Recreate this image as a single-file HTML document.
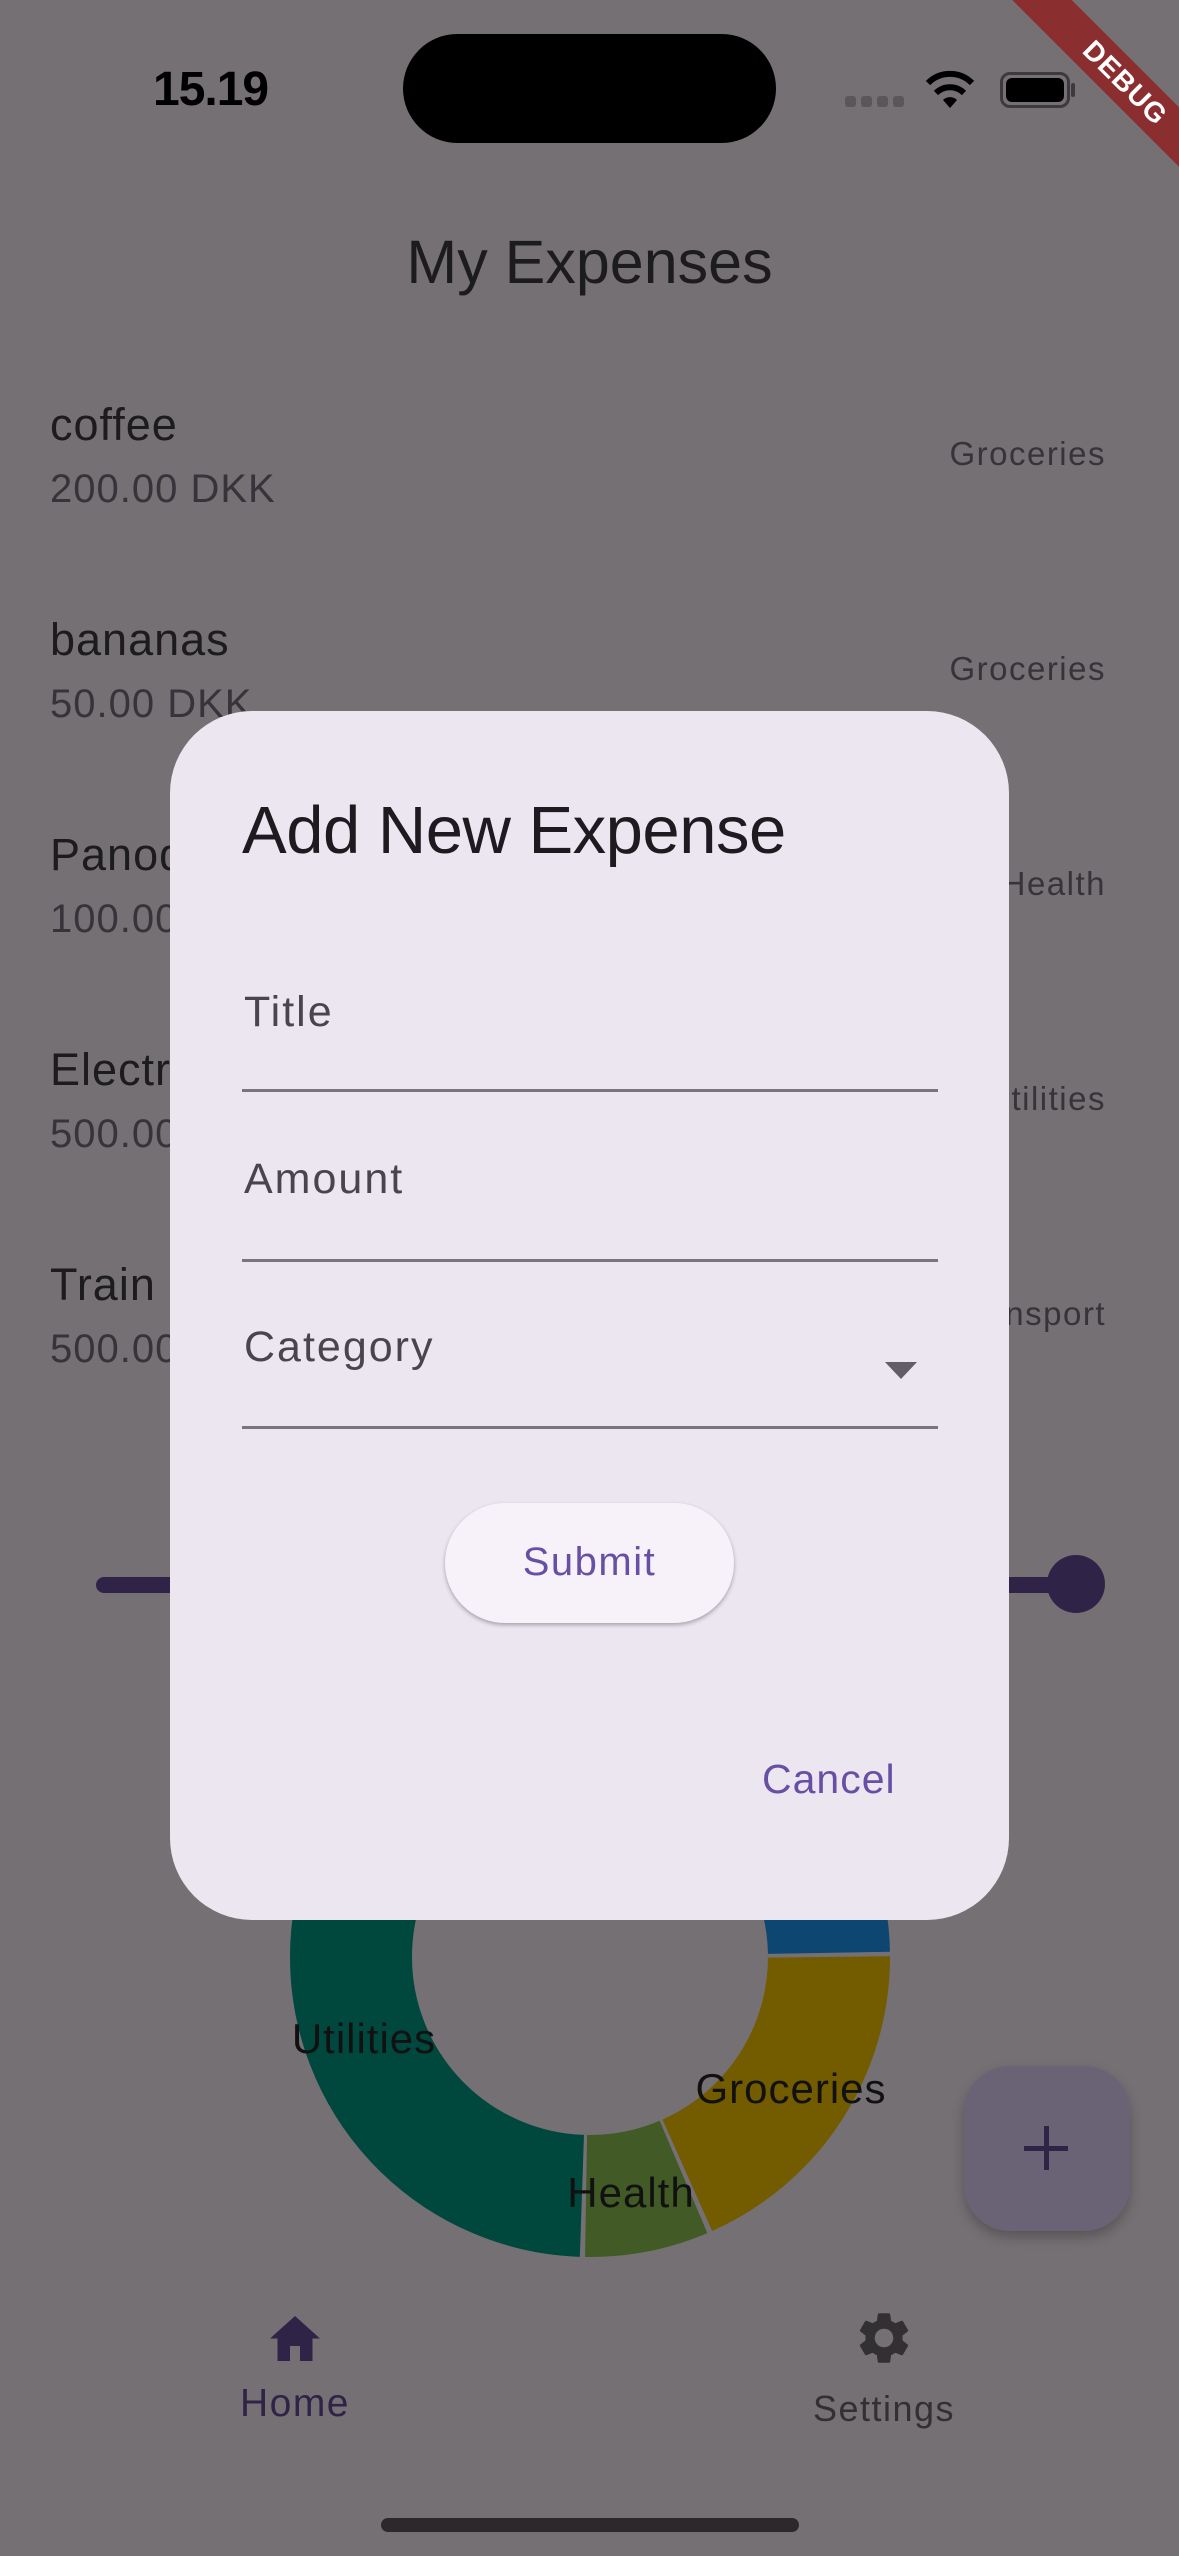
<!DOCTYPE html>
<html><head><meta charset="utf-8"><style>
*{margin:0;padding:0;box-sizing:border-box}
body{width:1179px;height:2556px;background:#757074;position:relative;overflow:hidden;font-family:"Liberation Sans",sans-serif;color:#1c1b1e}
.a{position:absolute;white-space:nowrap;line-height:1}
.t{font-size:45px;color:#1c1b1e;letter-spacing:1px}
.s{font-size:40px;color:#36333a;letter-spacing:1px}
.c{font-size:33px;color:#36333a;letter-spacing:1.5px}
</style></head><body>
<!-- status bar -->
<div class="a" style="left:153px;top:66px;font-size:48px;font-weight:bold;color:#000;letter-spacing:-1px">15.19</div>
<div class="a" style="left:403px;top:34px;width:373px;height:109px;border-radius:55px;background:#000"></div>
<div class="a" style="left:845px;top:96px;width:60px;height:11px">
<span style="position:absolute;left:0;width:11px;height:11px;border-radius:3px;background:#5a565a"></span>
<span style="position:absolute;left:16px;width:11px;height:11px;border-radius:3px;background:#5a565a"></span>
<span style="position:absolute;left:32px;width:11px;height:11px;border-radius:3px;background:#5a565a"></span>
<span style="position:absolute;left:48px;width:11px;height:11px;border-radius:3px;background:#5a565a"></span></div>
<svg class="a" style="left:925px;top:68px" width="50" height="42" viewBox="0 0 50 42"><path d="M25 40 L18 32 A10 10 0 0 1 32 32 Z" fill="#000"/><path d="M11 25 A20 20 0 0 1 39 25" stroke="#000" stroke-width="6" fill="none"/><path d="M3 15 A31 31 0 0 1 47 15" stroke="#000" stroke-width="6" fill="none"/></svg>
<div class="a" style="left:1000px;top:72px;width:70px;height:36px;border:3px solid #3d3a3e;border-radius:10px;padding:3px"><div style="width:100%;height:100%;background:#000;border-radius:6px"></div></div>
<div class="a" style="left:1071px;top:83px;width:4px;height:14px;background:#3d3a3e;border-radius:2px"></div>
<!-- debug banner -->
<div class="a" style="left:985px;top:62px;width:280px;height:42px;background:#8a2e30;transform:rotate(45deg);color:#fff;font-weight:bold;font-size:28px;text-align:center;line-height:42px;letter-spacing:1px">DEBUG</div>
<!-- title -->
<div class="a" style="left:0;width:1179px;text-align:center;top:232px;font-size:61px;color:#1c1b1e">My Expenses</div>
<!-- list -->
<div class="a t" style="left:50px;top:402px">coffee</div>
<div class="a s" style="left:50px;top:469px">200.00 DKK</div>
<div class="a c" style="right:73px;top:437px">Groceries</div>
<div class="a t" style="left:50px;top:617px">bananas</div>
<div class="a s" style="left:50px;top:684px">50.00 DKK</div>
<div class="a c" style="right:73px;top:652px">Groceries</div>
<div class="a t" style="left:50px;top:832px">Panodil</div>
<div class="a s" style="left:50px;top:899px">100.00 DKK</div>
<div class="a c" style="right:73px;top:867px">Health</div>
<div class="a t" style="left:50px;top:1047px">Electricity</div>
<div class="a s" style="left:50px;top:1114px">500.00 DKK</div>
<div class="a c" style="right:73px;top:1082px">Utilities</div>
<div class="a t" style="left:50px;top:1262px">Train</div>
<div class="a s" style="left:50px;top:1329px">500.00 DKK</div>
<div class="a c" style="right:73px;top:1297px">Transport</div>
<!-- slider -->
<div class="a" style="left:96px;top:1577px;width:980px;height:16px;border-radius:8px;background:#2f2447"></div>
<div class="a" style="left:1047px;top:1555px;width:58px;height:58px;border-radius:50%;background:#2f2447"></div>
<!-- donut -->
<svg class="a" style="left:0;top:0" width="1179" height="2556">
<g transform="rotate(-90 590 1957)" fill="none" stroke-width="122">
<circle cx="590" cy="1957" r="239" stroke="#0d4670" pathLength="360" stroke-dasharray="89 271" stroke-dashoffset="0"/>
<circle cx="590" cy="1957" r="239" stroke="#735b00" pathLength="360" stroke-dasharray="66 294" stroke-dashoffset="-90"/>
<circle cx="590" cy="1957" r="239" stroke="#425a25" pathLength="360" stroke-dasharray="24 336" stroke-dashoffset="-157"/>
<circle cx="590" cy="1957" r="239" stroke="#00483e" pathLength="360" stroke-dasharray="117 243" stroke-dashoffset="-182"/>
<circle cx="590" cy="1957" r="239" stroke="#5a3a5a" pathLength="360" stroke-dasharray="59 301" stroke-dashoffset="-300"/>
</g>
<text x="364" y="2053" font-size="42" text-anchor="middle" fill="#111" font-family="Liberation Sans" letter-spacing="1">Utilities</text>
<text x="791" y="2103" font-size="42" text-anchor="middle" fill="#111" font-family="Liberation Sans" letter-spacing="1">Groceries</text>
<text x="631" y="2207" font-size="42" text-anchor="middle" fill="#111" font-family="Liberation Sans" letter-spacing="1">Health</text>
</svg>
<!-- FAB -->
<div class="a" style="left:964px;top:2066px;width:166px;height:165px;border-radius:46px;background:#6a6375;box-shadow:0 6px 12px rgba(0,0,0,.25)"></div>
<div class="a" style="left:1024px;top:2146px;width:44px;height:5px;background:#2e2445"></div>
<div class="a" style="left:1044px;top:2126px;width:5px;height:44px;background:#2e2445"></div>
<!-- nav -->
<svg class="a" style="left:265px;top:2308px" width="60" height="56" viewBox="0 0 24 22"><path d="M10 21v-6h4v6h5v-9h3L12 3 2 12h3v9z" fill="#2f2447"/></svg>
<div class="a" style="left:195px;width:200px;text-align:center;top:2384px;font-size:39px;color:#2f2447;letter-spacing:1.5px">Home</div>
<svg class="a" style="left:853px;top:2307px" width="62" height="62" viewBox="0 0 24 24"><path fill="#333033" d="M19.14 12.94c.04-.3.06-.61.06-.94 0-.32-.02-.64-.07-.94l2.03-1.58a.49.49 0 0 0 .12-.61l-1.92-3.32a.49.49 0 0 0-.59-.22l-2.39.96c-.5-.38-1.03-.7-1.62-.94l-.36-2.54a.48.48 0 0 0-.48-.41h-3.840c-.24 0-.43.17-.47.41l-.36 2.54c-.59.24-1.130.57-1.62.94l-2.39-.96a.48.48 0 0 0-.59.22L2.74 8.87c-.12.21-.08.47.12.61l2.03 1.58c-.05.3-.09.63-.09.94s.02.64.07.94l-2.03 1.58a.49.49 0 0 0-.12.61l1.92 3.32c.12.22.37.29.59.22l2.39-.96c.5.38 1.03.7 1.62.94l.36 2.54c.05.24.24.41.48.41h3.84c.24 0 .44-.17.47-.41l.36-2.54c.59-.24 1.13-.56 1.62-.94l2.39.96c.22.08.47 0 .59-.22l1.92-3.32c.12-.22.07-.47-.12-.61l-2.01-1.58zM12 15.6A3.6 3.6 0 1 1 12 8.4a3.6 3.6 0 0 1 0 7.2z"/></svg>
<div class="a" style="left:784px;width:200px;text-align:center;top:2391px;font-size:36px;color:#333033;letter-spacing:1.5px">Settings</div>
<div class="a" style="left:381px;top:2518px;width:418px;height:14px;border-radius:7px;background:#2b292b"></div>
<!-- dialog -->
<div class="a" style="left:170px;top:711px;width:839px;height:1209px;border-radius:82px;background:#ece6f0"></div>
<div class="a" style="left:242px;top:797px;font-size:67px;color:#1d1b20;letter-spacing:-0.5px">Add New Expense</div>
<div class="a" style="left:244px;top:991px;font-size:43px;color:#49454f;letter-spacing:2px">Title</div>
<div class="a" style="left:242px;top:1089px;width:696px;height:3px;background:#79747e"></div>
<div class="a" style="left:244px;top:1158px;font-size:43px;color:#49454f;letter-spacing:2px">Amount</div>
<div class="a" style="left:242px;top:1259px;width:696px;height:3px;background:#79747e"></div>
<div class="a" style="left:244px;top:1326px;font-size:43px;color:#49454f;letter-spacing:2px">Category</div>
<div class="a" style="left:885px;top:1362px;width:0;height:0;border-left:16px solid transparent;border-right:16px solid transparent;border-top:17px solid #625d66"></div>
<div class="a" style="left:242px;top:1426px;width:696px;height:3px;background:#79747e"></div>
<div class="a" style="left:445px;top:1503px;width:289px;height:120px;border-radius:60px;background:#f7f2fa;box-shadow:0 2px 4px rgba(0,0,0,.3)"></div>
<div class="a" style="left:445px;width:289px;text-align:center;top:1542px;font-size:40px;color:#6750a4;letter-spacing:1.5px">Submit</div>
<div class="a" style="left:762px;top:1759px;font-size:41px;color:#6750a4;letter-spacing:1px">Cancel</div>
</body></html>
